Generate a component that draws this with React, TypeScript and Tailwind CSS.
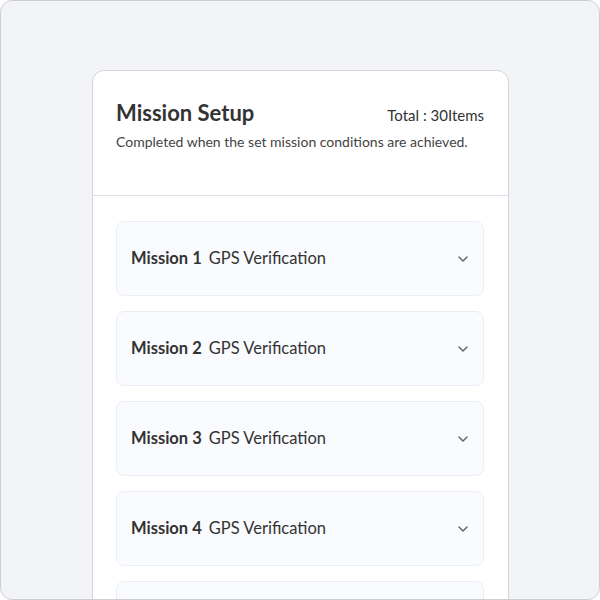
import { ChevronDown } from 'lucide-react';

const missions = [1, 2, 3, 4, 5].map((n) => ({
  id: n,
  label: `Mission ${n}`,
  type: 'GPS Verification',
}));

function MissionRow({ label, type }: { label: string; type: string }) {
  return (
    <div className="flex h-[75px] shrink-0 items-center justify-between rounded-lg border border-[#eceef5] bg-[#fafbfe] pl-[14px] pr-[12px]">
      <div className="flex items-baseline gap-[7px] text-[16.5px] text-[#333]">
        <span className="font-bold">{label}</span>
        <span>{type}</span>
      </div>
      <ChevronDown className="h-4 w-4 text-[#666]" strokeWidth={2.2} />
    </div>
  );
}

export default function App() {
  return (
    <div
      className="h-[600px] w-[600px] overflow-hidden rounded-xl border border-[#cfcfd3] bg-[#f3f4f8] pt-[69px]"
      style={{ fontFamily: '"Source Sans Pro", Lato, "Noto Sans", sans-serif' }}
    >
      <div className="ml-[91px] w-[417px] rounded-xl border border-[#d4d4d8] bg-white">
        <div className="flex flex-col gap-[6px] border-b border-[#dedde6] pb-[44px] pl-[23px] pr-6 pt-[28px]">
          <div className="flex items-center justify-between">
            <h1 className="text-[22px] font-bold leading-[28px] text-[#333]">Mission Setup</h1>
            <span className="pt-[4px] text-[15px] text-[#333]">Total : 30Items</span>
          </div>
          <p className="text-[14px] leading-[18px] text-[#444]">
            Completed when the set mission conditions are achieved.
          </p>
        </div>
        <div className="flex flex-col gap-[15px] pl-[23px] pr-6 pt-[25px]">
          {missions.map((m) => (
            <MissionRow key={m.id} label={m.label} type={m.type} />
          ))}
        </div>
      </div>
    </div>
  );
}
